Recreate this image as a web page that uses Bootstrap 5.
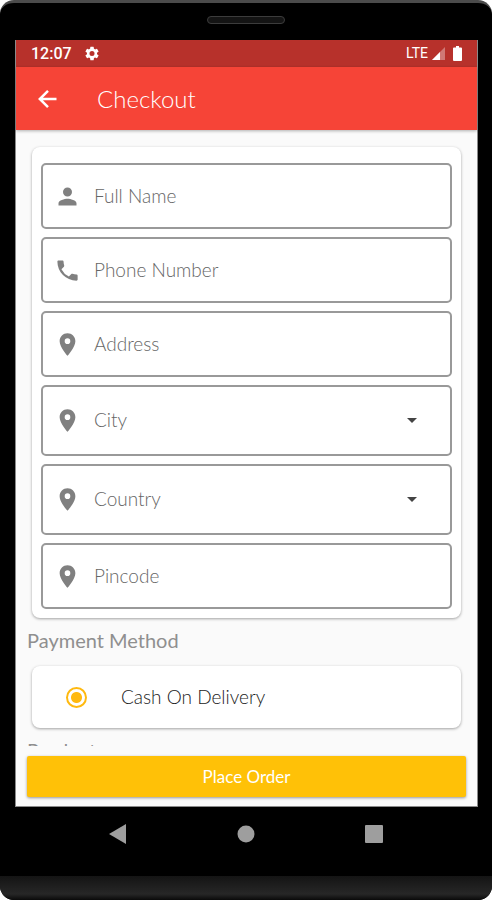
<!DOCTYPE html>
<html lang="en">
<head>
<meta charset="utf-8">
<meta name="viewport" content="width=device-width, initial-scale=1">
<title>Checkout</title>
<link href="https://cdn.jsdelivr.net/npm/bootstrap@5.3.0/dist/css/bootstrap.min.css" rel="stylesheet">
<style>
  body { font-family: Lato, "Open Sans", sans-serif; background: #fff; }
  .phone { background: #000; border-radius: 14px; border-top: 3px solid #4b4b4b; overflow: hidden; }
  .speaker-bar { height: 37px; padding-top: 13px; }
  .speaker { width: 78px; height: 8px; border: 1px solid #3c3c3c; border-radius: 4px; background: #141414; }
  .screen { margin: 0 14px 0 15px; border: solid #8a8a8a; border-width: 0 1px 1px; background: #fafafa; min-height: 0; }
  .status-bar { height: 27px; padding: 0 15px; background: #b7312b; font-family: Roboto, sans-serif; font-size: 16px; font-weight: 500; line-height: 27px; }
  .status-time { margin-right: 13px; }
  .network { font-size: 14px; font-weight: 400; }
  .app-bar { height: 63px; padding: 0 19px; gap: 37px; background: #f64437; box-shadow: 0 1px 3px rgba(0,0,0,.3); z-index: 1; }
  .app-title { font-size: 24px; font-weight: 300; line-height: 30px; }
  .checkout-form { min-height: 0; }
  .scroll-area { min-height: 0; overflow-y: auto; scrollbar-width: none; padding-top: 17px; }
  .scroll-area::-webkit-scrollbar { display: none; }
  .panel { margin: 0 16px; border-radius: 8px; background: #fff; box-shadow: 0 1px 3px rgba(0,0,0,.36); }
  .fields { padding: 16px 9px 9px; }
  .field { height: 66px; border: 2px solid #999; border-radius: 5px; color: #808080; }
  .field-tall { height: 71px; }
  .field:focus-within { border-color: #f64437; }
  .field-icon { width: 51px; padding-left: 11px; }
  .field .form-control, .field .form-select { font-size: 19px; font-weight: 300; color: #666; box-shadow: none; background-color: transparent; }
  .field .form-control::placeholder { color: #666; opacity: 1; }
  .field .form-select { background-image: url("data:image/svg+xml,%3csvg xmlns='http://www.w3.org/2000/svg' viewBox='0 0 10 5'%3e%3cpath fill='%23444' d='M0 0h10L5 5z'/%3e%3c/svg%3e"); background-size: 10px 5px; background-position: right 33px center; }
  .section-title { margin: 8px 11px 12px; font-size: 20px; line-height: 28px; font-weight: 400; color: #8f8f8f; }
  .pay-option { height: 62px; padding-left: 34px; gap: 34px; font-size: 19px; font-weight: 300; line-height: 24px; color: #222; }
  .pay-option .form-check-input { width: 21px; height: 21px; border: 2px solid #ffb90f; }
  .pay-option .form-check-input:checked { background-color: #fff; background-image: radial-gradient(circle, #ffb90f 5px, transparent 6px); }
  .action { padding: 10px 11px 9px; }
  .place-order { height: 41px; border-radius: 2px; background: #ffc107; font-size: 17px; font-weight: 400; line-height: 20px; box-shadow: 0 1px 3px rgba(0,0,0,.4); }
  .nav-keys { height: 69px; padding: 0 92px 15px; }
  .chin { height: 24px; background: linear-gradient(#141414, #272727 75%, #0a0a0a); }
</style>
<script src="https://cdn.jsdelivr.net/npm/bootstrap@5.3.0/dist/js/bootstrap.bundle.min.js"></script>
</head>
<body>
<svg class="d-none" aria-hidden="true">
  <symbol id="pin" viewBox="0 0 24 24"><path d="M12 2C8.13 2 5 5.13 5 9c0 5.25 7 13 7 13s7-7.75 7-13c0-3.87-3.13-7-7-7zm0 9.500a2.500 2.500 0 1 1 0-5 2.500 2.500 0 0 1 0 5z"/></symbol>
</svg>
<div class="phone vh-100 d-flex flex-column">
  <div class="speaker-bar flex-shrink-0"><div class="speaker mx-auto"></div></div>

  <div class="screen flex-grow-1 d-flex flex-column">
    <div class="status-bar flex-shrink-0 d-flex align-items-center text-white">
      <span class="status-time">12:07</span>
      <svg width="14" height="15" viewBox="2 2 20 20" fill="currentColor" aria-hidden="true"><path d="M19.140 12.940c.04-.3.06-.61.06-.94s-.02-.64-.07-.94l2.030-1.580a.49.49 0 0 0 .12-.61l-1.920-3.320a.49.49 0 0 0-.59-.22l-2.390.96a7 7 0 0 0-1.620-.94l-.36-2.540A.48.48 0 0 0 13.920 2.400h-3.840a.48.48 0 0 0-.47.41l-.36 2.540c-.59.24-1.130.57-1.620.94l-2.390-.96a.49.49 0 0 0-.59.22L2.740 8.870a.48.48 0 0 0 .12.61l2.030 1.580a6 6 0 0 0 0 1.880l-2.030 1.580a.49.49 0 0 0-.12.61l1.920 3.320c.12.22.37.29.59.22l2.390-.96c.5.38 1.030.7 1.620.94l.36 2.540c.05.24.24.41.47.41h3.840c.24 0 .44-.17.47-.41l.36-2.540a7 7 0 0 0 1.620-.94l2.390.96c.22.08.47 0 .59-.22l1.920-3.320a.48.48 0 0 0-.12-.61zM12 15.600a3.600 3.600 0 1 1 0-7.200 3.600 3.600 0 0 1 0 7.200z"/></svg>
      <span class="network ms-auto">LTE</span>
      <svg class="ms-1" width="13" height="13" viewBox="0 0 13 13" aria-hidden="true"><path fill="#fff" fill-opacity=".35" d="M13 0v13H0z"/><path fill="#fff" d="M8 5v8H0z"/></svg>
      <svg class="ms-2" width="9" height="15" viewBox="0 0 9 15" aria-hidden="true"><path fill="#fff" d="M3 0h3v1.500h2a1 1 0 0 1 1 1V14a1 1 0 0 1-1 1H1a1 1 0 0 1-1-1V2.500a1 1 0 0 1 1-1h2z"/></svg>
    </div>

    <header class="app-bar flex-shrink-0 d-flex align-items-center text-white">
      <button type="button" class="btn p-0 border-0 text-white d-flex" aria-label="Back">
        <svg width="25" height="24" viewBox="0 0 24 24" fill="none" stroke="currentColor" stroke-width="2.500" aria-hidden="true"><path d="M21 12H4.500M12.500 3.800L4.300 12l8.200 8.200"/></svg>
      </button>
      <h1 class="app-title m-0">Checkout</h1>
    </header>

    <form class="checkout-form flex-grow-1 d-flex flex-column">
      <main class="scroll-area flex-grow-1">
        <div class="panel fields d-flex flex-column gap-2">
          <div class="field d-flex align-items-center">
            <label class="field-icon flex-shrink-0" for="name"><svg width="27" height="27" viewBox="0 0 24 24" fill="currentColor" role="img" aria-label="Full Name"><path d="M12 12a4 4 0 1 0 0-8 4 4 0 0 0 0 8zm0 2c-2.670 0-8 1.340-8 4v2h16v-2c0-2.660-5.330-4-8-4z"/></svg></label>
            <input id="name" type="text" class="form-control border-0 p-0" placeholder="Full Name">
          </div>
          <div class="field d-flex align-items-center">
            <label class="field-icon flex-shrink-0" for="phone"><svg width="27" height="27" viewBox="0 0 24 24" fill="currentColor" role="img" aria-label="Phone Number"><path d="M6.620 10.790a15.150 15.150 0 0 0 6.590 6.590l2.200-2.200c.27-.27.67-.36 1.020-.24 1.120.37 2.330.57 3.570.57.55 0 1 .45 1 1V20c0 .55-.45 1-1 1C10.610 21 3 13.390 3 4c0-.55.45-1 1-1h3.500c.55 0 1 .45 1 1 0 1.250.2 2.450.57 3.570.11.35.03.74-.25 1.020z"/></svg></label>
            <input id="phone" type="tel" class="form-control border-0 p-0" placeholder="Phone Number">
          </div>
          <div class="field d-flex align-items-center">
            <label class="field-icon flex-shrink-0" for="address"><svg width="27" height="27" fill="currentColor" role="img" aria-label="Address"><use href="#pin"/></svg></label>
            <input id="address" type="text" class="form-control border-0 p-0" placeholder="Address">
          </div>
          <div class="field field-tall d-flex align-items-center">
            <label class="field-icon flex-shrink-0" for="city"><svg width="27" height="27" fill="currentColor" role="img" aria-label="City"><use href="#pin"/></svg></label>
            <select id="city" class="form-select border-0 p-0"><option>City</option></select>
          </div>
          <div class="field field-tall d-flex align-items-center">
            <label class="field-icon flex-shrink-0" for="country"><svg width="27" height="27" fill="currentColor" role="img" aria-label="Country"><use href="#pin"/></svg></label>
            <select id="country" class="form-select border-0 p-0"><option>Country</option></select>
          </div>
          <div class="field d-flex align-items-center">
            <label class="field-icon flex-shrink-0" for="pincode"><svg width="27" height="27" fill="currentColor" role="img" aria-label="Pincode"><use href="#pin"/></svg></label>
            <input id="pincode" type="text" class="form-control border-0 p-0" placeholder="Pincode">
          </div>
        </div>

        <h2 class="section-title">Payment Method</h2>
        <div class="panel pay-option d-flex align-items-center">
          <input class="form-check-input m-0 flex-shrink-0 shadow-none" type="radio" name="payment" id="cod" checked>
          <label for="cod">Cash On Delivery</label>
        </div>
        <h2 class="section-title">Product</h2>
      </main>

      <div class="action d-flex">
        <button type="submit" class="place-order btn w-100 p-0 border-0 text-white">Place Order</button>
      </div>
    </form>
  </div>

  <nav class="nav-keys flex-shrink-0 d-flex align-items-center justify-content-between" aria-label="System">
    <button type="button" class="btn p-0 border-0 d-flex" aria-label="Back"><svg width="52" height="20" viewBox="0 0 52 20" fill="#9e9e9e" aria-hidden="true"><path d="M34 0v20L17 10z"/></svg></button>
    <button type="button" class="btn p-0 border-0 d-flex" aria-label="Home"><svg width="18" height="18" viewBox="0 0 18 18" fill="#9e9e9e" aria-hidden="true"><circle cx="9" cy="9" r="8.500"/></svg></button>
    <button type="button" class="btn p-0 border-0 d-flex" aria-label="Overview"><svg width="52" height="18" viewBox="0 0 52 18" fill="#9e9e9e" aria-hidden="true"><rect x="17" width="18" height="18" rx="1"/></svg></button>
  </nav>
  <div class="chin flex-shrink-0"></div>
</div>
</body>
</html>
